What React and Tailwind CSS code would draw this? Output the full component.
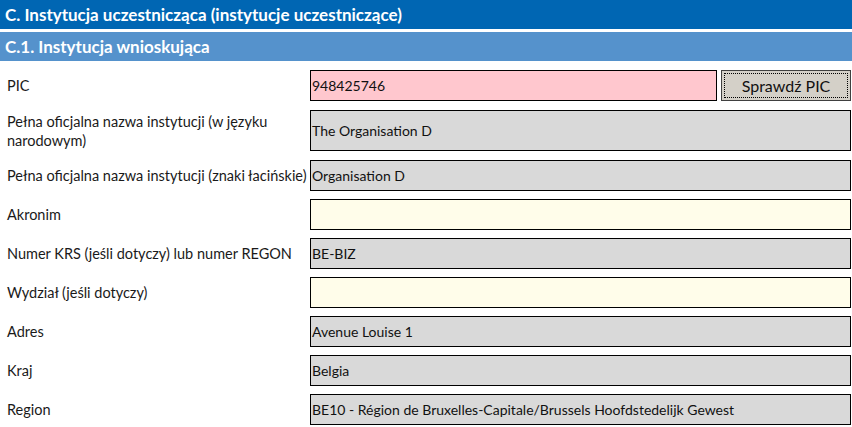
const FIELD_STYLES = {
    pink: 'bg-[#ffc7ce]',
    gray: 'bg-[#d9d9d9]',
    cream: 'bg-[#fffdea]',
};

const ROWS = [
    { label: 'Pełna oficjalna nazwa instytucji (w języku narodowym)', value: 'The Organisation D', tone: 'gray', tall: true },
    { label: 'Pełna oficjalna nazwa instytucji (znaki łacińskie)', value: 'Organisation D', tone: 'gray', nowrap: true },
    { label: 'Akronim', value: '', tone: 'cream' },
    { label: 'Numer KRS (jeśli dotyczy) lub numer REGON', value: 'BE-BIZ', tone: 'gray' },
    { label: 'Wydział (jeśli dotyczy)', value: '', tone: 'cream' },
    { label: 'Adres', value: 'Avenue Louise 1', tone: 'gray' },
    { label: 'Kraj', value: 'Belgia', tone: 'gray' },
    { label: 'Region', value: 'BE10 - Région de Bruxelles-Capitale/Brussels Hoofdstedelijk Gewest', tone: 'gray' },
];

function Field({ value, tone, className = '' }) {
    return (
        <div className={`flex items-center border border-black pl-[1px] text-[14px] text-[#111] ${FIELD_STYLES[tone]} ${className}`}>
            {value}
        </div>
    );
}

function Row({ label, children, tall, nowrap }) {
    return (
        <div className={`flex ${tall ? 'h-[51px] py-[5px]' : 'h-[39px] py-[4px]'}`}>
            <div className={`flex w-[310px] shrink-0 items-center pl-[7px] pr-1 text-[14.5px] leading-[19px] text-[#1a1a1a] ${nowrap ? 'whitespace-nowrap' : ''}`}>
                {label}
            </div>
            <div className="flex flex-1 pr-[1px]">{children}</div>
        </div>
    );
}

export default function App() {
    return (
        <div className="h-[427px] w-[852px] overflow-hidden bg-white font-['Lato',sans-serif]">
            <div className="flex h-[29px] items-center bg-[#0066b3] pl-[5px] text-[17px] font-bold text-white">
                C. Instytucja uczestnicząca (instytucje uczestniczące)
            </div>
            <div className="mt-[3px] flex h-[29px] items-center bg-[#5592cc] pl-[5px] text-[17px] font-bold text-white">
                C.1. Instytucja wnioskująca
            </div>
            <div className="mt-[5px]">
                <Row label="PIC">
                    <Field value="948425746" tone="pink" className="flex-1" />
                    <button className="ml-[4px] w-[130px] border border-[#404040] bg-[#d4d0c8] p-[2px] text-[16px] text-[#111]">
                        <span className="flex h-full w-full items-center justify-center border border-dotted border-black">
                            Sprawdź PIC
                        </span>
                    </button>
                </Row>
                {ROWS.map((row) => (
                    <Row key={row.label} label={row.label} tall={row.tall} nowrap={row.nowrap}>
                        <Field value={row.value} tone={row.tone} className="flex-1" />
                    </Row>
                ))}
            </div>
        </div>
    );
}
